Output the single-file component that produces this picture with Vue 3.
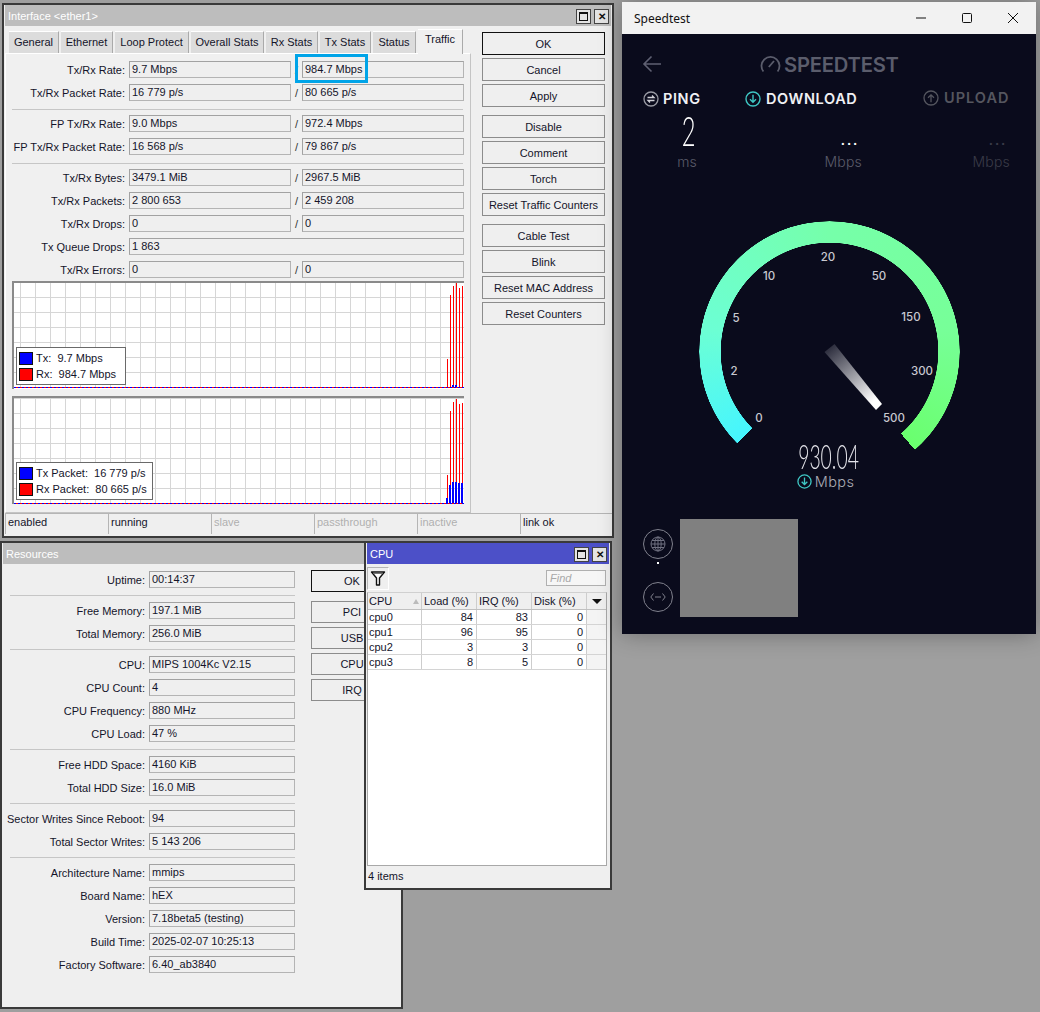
<script setup>
const tabs = [
  { t: 'General', w: 50 }, { t: 'Ethernet', w: 52 }, { t: 'Loop Protect', w: 74 }, { t: 'Overall Stats', w: 73 },
  { t: 'Rx Stats', w: 52 }, { t: 'Tx Stats', w: 51 }, { t: 'Status', w: 43 }, { t: 'Traffic', w: 45 }
]
const ifaceRows = [
  { l: 'Tx/Rx Rate:', a: '9.7 Mbps', b: '984.7 Mbps' },
  { l: 'Tx/Rx Packet Rate:', a: '16 779 p/s', b: '80 665 p/s' },
  { sep: true },
  { l: 'FP Tx/Rx Rate:', a: '9.0 Mbps', b: '972.4 Mbps' },
  { l: 'FP Tx/Rx Packet Rate:', a: '16 568 p/s', b: '79 867 p/s' },
  { sep: true },
  { l: 'Tx/Rx Bytes:', a: '3479.1 MiB', b: '2967.5 MiB' },
  { l: 'Tx/Rx Packets:', a: '2 800 653', b: '2 459 208' },
  { l: 'Tx/Rx Drops:', a: '0', b: '0' },
  { l: 'Tx Queue Drops:', a: '1 863' },
  { l: 'Tx/Rx Errors:', a: '0', b: '0' }
]
const ifaceBtnGroups = [
  [{ t: 'OK', def: true }, { t: 'Cancel' }, { t: 'Apply' }],
  [{ t: 'Disable' }, { t: 'Comment' }, { t: 'Torch' }, { t: 'Reset Traffic Counters' }],
  [{ t: 'Cable Test' }, { t: 'Blink' }, { t: 'Reset MAC Address' }, { t: 'Reset Counters' }]
]
const statuses = [
  { t: 'enabled', w: 103 },
  { t: 'running', w: 103 },
  { t: 'slave', w: 103, off: true },
  { t: 'passthrough', w: 103, off: true },
  { t: 'inactive', w: 103, off: true },
  { t: 'link ok', w: 92 }
]
const gridV = Array.from({ length: 30 }, (_, i) => 8 + 15 * i)
const graphs = [
  {
    base: 106,
    legend: ['Tx:  9.7 Mbps', 'Rx:  984.7 Mbps'],
    lw: 110,
    red: [[435, 78], [438, 14], [441, 5], [444, 2], [447, 7], [450, 5]],
    blue: [[440, 104], [443, 104]]
  },
  {
    base: 107,
    legend: ['Tx Packet:  16 779 p/s', 'Rx Packet:  80 665 p/s'],
    lw: 137,
    red: [[435, 79], [438, 15], [441, 6], [444, 3], [447, 8], [450, 7]],
    blue: [[434, 102], [437, 89], [440, 86], [443, 86], [446, 87], [449, 87]]
  }
]
const resRows = [
  { l: 'Uptime:', a: '00:14:37' },
  { sep: true },
  { l: 'Free Memory:', a: '197.1 MiB' },
  { l: 'Total Memory:', a: '256.0 MiB' },
  { sep: true },
  { l: 'CPU:', a: 'MIPS 1004Kc V2.15' },
  { l: 'CPU Count:', a: '4' },
  { l: 'CPU Frequency:', a: '880 MHz' },
  { l: 'CPU Load:', a: '47 %' },
  { sep: true },
  { l: 'Free HDD Space:', a: '4160 KiB' },
  { l: 'Total HDD Size:', a: '16.0 MiB' },
  { sep: true },
  { l: 'Sector Writes Since Reboot:', a: '94' },
  { l: 'Total Sector Writes:', a: '5 143 206' },
  { sep: true },
  { l: 'Architecture Name:', a: 'mmips' },
  { l: 'Board Name:', a: 'hEX' },
  { l: 'Version:', a: '7.18beta5 (testing)' },
  { l: 'Build Time:', a: '2025-02-07 10:25:13' },
  { l: 'Factory Software:', a: '6.40_ab3840' }
]
const cpus = [
  ['cpu0', 84, 83, 0],
  ['cpu1', 96, 95, 0],
  ['cpu2', 3, 3, 0],
  ['cpu3', 8, 5, 0]
]
const ticks = [
  { t: '0', x: 137, y: 218 },
  { t: '2', x: 112, y: 171 },
  { t: '5', x: 114, y: 118 },
  { t: '10', x: 147, y: 76 },
  { t: '20', x: 206, y: 57 },
  { t: '50', x: 257, y: 76 },
  { t: '150', x: 289, y: 117 },
  { t: '300', x: 300, y: 171 },
  { t: '500', x: 272, y: 218 }
]
</script>

<template>
  <div class="desk">
    <!-- Interface window -->
    <section class="win iface">
      <header class="tbar">
        <span class="ttl">Interface &lt;ether1&gt;</span>
        <span class="wbtn"><i class="maxi"></i></span>
        <span class="wbtn x">✕</span>
      </header>
      <div class="iface-main">
        <div class="iface-left">
          <nav class="tabs">
            <span v-for="t in tabs" :key="t.t" class="tab" :class="{ on: t.t === 'Traffic' }" :style="{ width: t.w + 'px' }">{{ t.t }}</span>
          </nav>
          <div class="panel">
            <div class="form">
              <template v-for="(r, i) in ifaceRows" :key="i">
                <div v-if="r.sep" class="sep"></div>
                <div v-else class="row">
                  <label class="lab">{{ r.l }}</label>
                  <div v-if="r.b" class="pair">
                    <span class="fld">{{ r.a }}</span>
                    <span class="slash">/</span>
                    <span class="fld">{{ r.b }}</span>
                  </div>
                  <span v-else class="fld wide">{{ r.a }}</span>
                </div>
              </template>
            </div>
            <div v-for="(g, gi) in graphs" :key="gi" class="graph">
              <svg width="452" height="108" shape-rendering="crispEdges">
                <rect width="452" height="108" fill="#fff" />
                <line v-for="x in gridV" :key="'v' + x" :x1="x" :x2="x" y1="0" :y2="g.base" stroke="#d6d6d6" />
                <line v-for="n in 7" :key="'h' + n" x1="0" x2="452" :y1="g.base - 15 * n" :y2="g.base - 15 * n" stroke="#d6d6d6" />
                <line x1="0" x2="452" :y1="g.base + 0.5" :y2="g.base + 0.5" stroke="#f00" stroke-dasharray="2 2" />
                <line x1="2" x2="452" :y1="g.base + 0.5" :y2="g.base + 0.5" stroke="#00f" stroke-dasharray="2 2" />
                <line v-for="b in g.red" :key="'r' + b[0]" :x1="b[0] + 0.5" :x2="b[0] + 0.5" :y1="b[1]" :y2="g.base" stroke="#f00" />
                <line v-for="b in g.blue" :key="'b' + b[0]" :x1="b[0] + 0.5" :x2="b[0] + 0.5" :y1="b[1]" :y2="g.base" stroke="#00f" stroke-width="2" />
                <rect width="452" height="2" fill="#8a8a8a" />
                <rect width="2" height="108" fill="#8a8a8a" />
              </svg>
              <div class="legend" :style="{ width: g.lw + 'px' }">
                <div class="lg"><i class="sw blue"></i><span>{{ g.legend[0] }}</span></div>
                <div class="lg"><i class="sw red"></i><span>{{ g.legend[1] }}</span></div>
              </div>
            </div>
          </div>
        </div>
        <div class="iface-btns">
          <div v-for="(grp, i) in ifaceBtnGroups" :key="i" class="btn-grp">
            <button v-for="b in grp" :key="b.t" class="btn" :class="{ def: b.def }">{{ b.t }}</button>
          </div>
        </div>
      </div>
      <footer class="status">
        <span v-for="s in statuses" :key="s.t" class="st" :class="{ off: s.off }" :style="{ width: s.w + 'px' }">{{ s.t }}</span>
      </footer>
      <div class="hl"></div>
    </section>

    <!-- Resources window -->
    <section class="win res">
      <header class="tbar">
        <span class="ttl">Resources</span>
      </header>
      <div class="res-main">
        <div class="form res-form">
          <template v-for="(r, i) in resRows" :key="i">
            <div v-if="r.sep" class="sep"></div>
            <div v-else class="row">
              <label class="lab">{{ r.l }}</label>
              <span class="fld">{{ r.a }}</span>
            </div>
          </template>
        </div>
        <div class="res-btns">
          <button class="btn def">OK</button>
          <div class="res-sub">
            <button class="btn">PCI</button>
            <button class="btn">USB</button>
            <button class="btn">CPU</button>
            <button class="btn">IRQ</button>
          </div>
        </div>
      </div>
    </section>

    <!-- CPU window -->
    <section class="win cpu">
      <header class="tbar blue">
        <span class="ttl">CPU</span>
        <span class="wbtn"><i class="maxi"></i></span>
        <span class="wbtn x">✕</span>
      </header>
      <div class="cpu-tools">
        <button class="filter">
          <svg width="16" height="17" viewBox="0 0 16 17">
            <path d="M1.5 2 H14.5 L9.5 8 V15 L6.5 15 V8 Z" fill="#fff" stroke="#111" stroke-width="1.4" stroke-linejoin="round" />
            <path d="M3.5 3.5 H12.5" stroke="#777" />
          </svg>
        </button>
        <span class="find">Find</span>
      </div>
      <div class="tbl">
        <div class="tr th">
          <span class="c c0">CPU<i class="sort"></i></span>
          <span class="c c1">Load (%)</span>
          <span class="c c1">IRQ (%)</span>
          <span class="c c1">Disk (%)</span>
          <span class="c cd"><i class="drop"></i></span>
        </div>
        <div v-for="r in cpus" :key="r[0]" class="tr">
          <span class="c c0">{{ r[0] }}</span>
          <span class="c c1 num">{{ r[1] }}</span>
          <span class="c c1 num">{{ r[2] }}</span>
          <span class="c c1 num">{{ r[3] }}</span>
          <span class="c cd gy"></span>
        </div>
      </div>
      <footer class="cpu-foot">4 items</footer>
    </section>

    <!-- Speedtest window -->
    <section class="speed">
      <header class="sp-title">
        <span class="sp-name">Speedtest</span>
        <span class="sp-ctl">
          <svg width="12" height="12" viewBox="0 0 12 12"><path d="M1 6 H11" stroke="#111" stroke-width="1" /></svg>
        </span>
        <span class="sp-ctl">
          <svg width="12" height="12" viewBox="0 0 12 12"><rect x="1.5" y="1.5" width="9" height="9" rx="1" fill="none" stroke="#111" /></svg>
        </span>
        <span class="sp-ctl">
          <svg width="12" height="12" viewBox="0 0 12 12"><path d="M1 1 L11 11 M11 1 L1 11" stroke="#111" stroke-width="1" /></svg>
        </span>
      </header>
      <div class="sp-body">
        <div class="sp-top">
          <div class="sp-head">
            <svg class="back" width="20" height="18" viewBox="0 0 20 18">
              <path d="M19 9 H2 M9.5 1.5 L2 9 L9.5 16.5" fill="none" stroke="#5f6072" stroke-width="1.6" />
            </svg>
            <svg class="logo-ic" width="21" height="18" viewBox="0 0 21 18">
              <path d="M3.4 16.5 A9 9 0 1 1 17.6 16.5" fill="none" stroke="#5b5d6c" stroke-width="1.8" />
              <path d="M8.8 12 L14 6" stroke="#5b5d6c" stroke-width="1.8" />
            </svg>
            <span class="logo">SPEEDTEST</span>
          </div>
          <div class="sp-stats">
            <div class="stat s1">
              <div class="st-lab">
                <svg width="16" height="16" viewBox="0 0 16 16">
                  <circle cx="8" cy="8" r="7" fill="none" stroke="#9a9ba4" stroke-width="1.3" />
                  <path d="M4.5 6.5 H11 L9 4.5 M11.5 9.5 H5 L7 11.5" fill="none" stroke="#d0d0d6" stroke-width="1.3" />
                </svg>
                <span>PING</span>
              </div>
              <div class="st-val big">2</div>
              <div class="st-unit">ms</div>
            </div>
            <div class="stat s2">
              <div class="st-lab">
                <svg width="16" height="16" viewBox="0 0 16 16">
                  <circle cx="8" cy="8" r="7" fill="none" stroke="#3fc7c4" stroke-width="1.4" />
                  <path d="M8 3.8 V11 M5 8.2 L8 11.2 L11 8.2" fill="none" stroke="#3fc7c4" stroke-width="1.4" />
                </svg>
                <span>DOWNLOAD</span>
              </div>
              <div class="st-val dots">...</div>
              <div class="st-unit">Mbps</div>
            </div>
            <div class="stat s3">
              <div class="st-lab">
                <svg width="16" height="16" viewBox="0 0 16 16">
                  <circle cx="8" cy="8" r="7" fill="none" stroke="#55565f" stroke-width="1.3" />
                  <path d="M8 12.2 V5 M5 7.8 L8 4.8 L11 7.8" fill="none" stroke="#55565f" stroke-width="1.3" />
                </svg>
                <span>UPLOAD</span>
              </div>
              <div class="st-val dots dim">...</div>
              <div class="st-unit dim">Mbps</div>
            </div>
          </div>
        </div>
        <div class="gauge">
          <div class="arc"></div>
          <span v-for="t in ticks" :key="t.t" class="tick" :style="{ left: t.x + 'px', top: t.y + 'px' }">{{ t.t }}</span>
          <svg class="needle" width="70" height="80" viewBox="0 0 70 80">
            <defs>
              <linearGradient id="nd" x1="6" y1="6" x2="58" y2="70" gradientUnits="userSpaceOnUse">
                <stop offset="0" stop-color="#2b2c3c" />
                <stop offset="0.85" stop-color="#fff" />
                <stop offset="1" stop-color="#fff" />
              </linearGradient>
            </defs>
            <polygon points="2.5,10 12.5,2 60,62 54,68" fill="url(#nd)" />
          </svg>
          <div class="readout">
            <div class="speedv">930.04</div>
            <div class="rd-unit">
              <svg width="15" height="15" viewBox="0 0 16 16">
                <circle cx="8" cy="8" r="7" fill="none" stroke="#3fc7c4" stroke-width="1.4" />
                <path d="M8 3.8 V11 M5 8.2 L8 11.2 L11 8.2" fill="none" stroke="#3fc7c4" stroke-width="1.4" />
              </svg>
              <span>Mbps</span>
            </div>
          </div>
        </div>
        <div class="sp-foot">
          <div class="ic-col">
            <span class="ring">
              <svg width="16" height="16" viewBox="0 0 16 16" fill="none" stroke="#6f7080" stroke-width="1">
                <circle cx="8" cy="8" r="7" />
                <ellipse cx="8" cy="8" rx="3.2" ry="7" />
                <path d="M1 8 H15 M2 4.5 H14 M2 11.5 H14 M8 1 V15" />
              </svg>
            </span>
            <i class="dot"></i>
            <span class="ring r2">
              <svg width="16" height="10" viewBox="0 0 16 10" fill="none" stroke="#80818d" stroke-width="1">
                <path d="M3.5 1.5 L0.8 5 L3.5 8.5 M12.5 1.5 L15.2 5 L12.5 8.5 M5 5 H11" />
              </svg>
            </span>
          </div>
          <div class="gray"></div>
        </div>
      </div>
    </section>
  </div>
</template>

<style scoped>
.desk {
  position: relative;
  width: 1040px;
  height: 1012px;
  overflow: hidden;
  font-family: "Liberation Sans", Arial, sans-serif;
  font-size: 11px;
  color: #14142a;
}
.win {
  position: absolute;
  box-sizing: border-box;
  background: #efefef;
  border: 2px solid #3a3a3a;
  display: flex;
  flex-direction: column;
}
.tbar {
  height: 21px;
  background: #bdbdbd;
  display: flex;
  align-items: center;
  gap: 3px;
  padding: 1px 2px 0 3px;
  box-sizing: border-box;
  flex: none;
  margin: 0 1px;
}
.tbar.blue { background: #4c50c8; }
.ttl {
  flex: 1;
  color: #fff;
  font-size: 11px;
}
.wbtn {
  box-sizing: border-box;
  width: 15px;
  height: 15px;
  background: #e4e4e4;
  border: 1px solid #444;
  display: flex;
  align-items: center;
  justify-content: center;
}
.wbtn.x {
  font-size: 10px;
  font-weight: 700;
  color: #111;
}
.maxi {
  display: block;
  width: 9px;
  height: 9px;
  box-sizing: border-box;
  border: 1px solid #111;
  border-top-width: 2px;
}

/* interface */
.iface {
  left: 2px;
  top: 3px;
  width: 612px;
  height: 535px;
}
.iface-main {
  display: flex;
  flex: 1;
  padding-left: 1px;
}
.iface-left { width: 466px; }
.tabs {
  display: flex;
  gap: 2px;
  height: 27px;
  align-items: flex-end;
  padding-left: 4px;
}
.tab {
  box-sizing: border-box;
  height: 22px;
  padding-top: 4px;
  text-align: center;
  background: #dcdcdc;
  border-top: 1px solid #fff;
  border-right: 1px solid #aaa;
  white-space: nowrap;
  flex: none;
}
.tab.on {
  height: 25px;
  padding-top: 3px;
  background: #f0f0f0;
  margin-bottom: -1px;
  position: relative;
  z-index: 1;
}
.panel {
  box-sizing: border-box;
  height: 460px;
  border: 1px solid #c4c4c4;
  border-top-color: #fff;
  border-left-color: #fff;
  padding: 7px 0 0 6px;
  background: #f0f0f0;
}
.form { display: flex; flex-direction: column; }
.panel .form { margin-bottom: 3px; }
.row {
  display: flex;
  height: 17px;
  margin-bottom: 6px;
  align-items: center;
}
.panel .row:last-child { margin-bottom: 0; }
.lab {
  display: flex;
  justify-content: flex-end;
  width: 113px;
  margin-right: 4px;
  white-space: nowrap;
  flex: none;
}
.pair { display: flex; align-items: center; }
.fld {
  box-sizing: border-box;
  display: block;
  width: 162px;
  height: 17px;
  line-height: 15px;
  padding-left: 2px;
  background: #efefef;
  border: 1px solid #a2a2a2;
  border-bottom-color: #b4b4b4;
  border-right-color: #b4b4b4;
  white-space: nowrap;
  flex: none;
}
.fld.wide { width: 335px; }
.slash {
  width: 11px;
  text-align: center;
  color: #333;
  flex: none;
}
.sep {
  height: 1px;
  background: #c6c6c6;
  margin: 2px 0 5px;
  width: 451px;
}
.graph {
  position: relative;
  width: 452px;
  height: 108px;
  margin-bottom: 7px;
}
.graph svg { display: block; }
.legend {
  position: absolute;
  left: 4px;
  bottom: 4px;
  height: 38px;
  box-sizing: border-box;
  background: #fff;
  border: 1px solid #6a6a6a;
  padding: 2px 0 0 2px;
  white-space: pre;
}
.lg {
  display: flex;
  align-items: center;
  gap: 3px;
  height: 16px;
}
.sw {
  display: block;
  width: 14px;
  height: 13px;
  box-sizing: border-box;
  border: 1px solid #111;
}
.sw.blue { background: #00f; }
.sw.red { background: #f00; }
.iface-btns {
  width: 123px;
  margin-left: 11px;
  padding-top: 6px;
}
.btn-grp {
  display: flex;
  flex-direction: column;
  gap: 3px;
  margin-bottom: 8px;
}
.btn {
  box-sizing: border-box;
  display: block;
  width: 123px;
  height: 23px;
  background: #efefef;
  border: 1px solid #8c8c8c;
  padding: 0;
  font: 11px "Liberation Sans", Arial, sans-serif;
  color: #14142a;
  text-align: center;
}
.btn.def { border-color: #111; }
.status {
  display: flex;
  height: 21px;
  padding-left: 1px;
  margin-bottom: 2px;
  flex: none;
}
.st {
  box-sizing: border-box;
  border-top: 1px solid #b5b5b5;
  border-left: 1px solid #b5b5b5;
  padding: 2px 0 0 2px;
  background: #efefef;
}
.st.off { color: #b0b0b0; }
.hl {
  position: absolute;
  left: 291px;
  top: 49px;
  width: 73px;
  height: 29px;
  box-sizing: border-box;
  border: 3px solid #00a4e8;
}

/* resources */
.res {
  left: 0;
  top: 541px;
  width: 403px;
  height: 468px;
}
.res-main {
  display: flex;
  padding: 7px 0 0 8px;
}
.res-form { width: 285px; }
.res-form .lab {
  width: 135px;
  margin-right: 4px;
}
.res-form .fld { width: 146px; }
.res-form .sep {
  width: 285px;
  margin: 1px 0 6px;
}
.res-btns {
  margin-left: 16px;
  margin-top: -1px;
}
.res-btns .btn {
  width: 82px;
  height: 22px;
  white-space: nowrap;
}
.res-sub {
  margin-top: 9px;
  display: flex;
  flex-direction: column;
  gap: 4px;
}

/* cpu */
.cpu {
  left: 364px;
  top: 541px;
  width: 248px;
  height: 349px;
  z-index: 2;
}
.cpu-tools {
  height: 28px;
  display: flex;
  align-items: center;
  justify-content: space-between;
  padding: 0 4px 0 1px;
  flex: none;
}
.filter {
  width: 22px;
  height: 23px;
  padding: 2px 0 0;
  background: #efefef;
  border: 1px solid #b5b5b5;
  border-right-color: #fff;
  border-bottom-color: #fff;
  display: flex;
  justify-content: center;
}
.find {
  box-sizing: border-box;
  width: 60px;
  height: 16px;
  background: #f6f6f6;
  border: 1px solid #b0b0b0;
  color: #a8a8a8;
  font-style: italic;
  padding-left: 3px;
  line-height: 14px;
}
.tbl {
  flex: 1;
  margin: 0 3px 0 1px;
  background: #fff;
  border: 1px solid #a8a8a8;
  border-top-color: #d0d0d0;
}
.tr {
  display: flex;
  box-sizing: border-box;
  height: 15px;
  line-height: 14px;
  border-bottom: 1px solid #d4d4d4;
}
.th {
  height: 17px;
  line-height: 16px;
  background: #efefef;
  border-bottom-color: #c0c0c0;
}
.c {
  box-sizing: border-box;
  border-right: 1px solid #cdcdcd;
  padding: 0 2px;
  position: relative;
  white-space: nowrap;
  flex: none;
}
.c0 { width: 54px; padding-left: 1px; }
.c1 { width: 55px; }
.cd { width: 19px; border-right: 0; }
.gy { background: #f4f4f4; }
.num { text-align: right; padding-right: 3px; }
.sort {
  position: absolute;
  right: 2px;
  top: 6px;
  width: 0;
  height: 0;
  border: 3px solid transparent;
  border-bottom: 5px solid #bbb;
  border-top: 0;
}
.drop {
  position: absolute;
  left: 5px;
  top: 6px;
  width: 0;
  height: 0;
  border: 5px solid transparent;
  border-top: 5px solid #111;
  border-bottom: 0;
}
.cpu-foot {
  height: 22px;
  line-height: 20px;
  padding-left: 2px;
  flex: none;
}

/* speedtest */
.speed {
  position: absolute;
  left: 622px;
  top: 2px;
  width: 414px;
  height: 632px;
  z-index: 3;
  box-shadow: 0 0 22px rgba(0, 0, 0, 0.32);
  display: flex;
  flex-direction: column;
  font-family: Inter, "Liberation Sans", sans-serif;
}
.sp-title {
  height: 32px;
  background: #f2f2f2;
  display: flex;
  align-items: center;
  flex: none;
  color: #111;
  padding-left: 12px;
  font-family: "Noto Sans", sans-serif;
}
.sp-name { flex: 1; font-size: 12px; }
.sp-ctl {
  width: 46px;
  height: 32px;
  display: flex;
  align-items: center;
  justify-content: center;
}
.sp-body {
  flex: 1;
  background: #0a0b1c;
  display: flex;
  flex-direction: column;
}
.sp-top { height: 166px; padding-left: 21px; }
.sp-head {
  height: 50px;
  display: flex;
  align-items: center;
  padding-top: 10px;
  box-sizing: border-box;
}
.back { margin-left: -1px; }
.logo-ic { margin-left: 98px; margin-right: 3px; }
.logo {
  color: #5b5d6c;
  font-size: 20.2px;
  font-weight: 600;
  letter-spacing: -0.2px;
}
.sp-stats { display: flex; margin-top: 6px; }
.stat { box-sizing: border-box; text-align: right; flex: none; }
.s1 { width: 102px; padding-right: 48px; }
.s2 { width: 117px; }
.s3 { width: 87px; margin-left: 61px; }
.st-lab {
  display: flex;
  align-items: center;
  height: 17px;
  gap: 5px;
  font-size: 14.5px;
  font-weight: 600;
  letter-spacing: 0.6px;
  color: #f0f0f4;
  white-space: nowrap;
}
.s1 .st-lab { width: 60px; gap: 4px; }
.s3 .st-lab { color: #55565f; letter-spacing: 1px; margin-top: -1px; margin-bottom: 1px; }
.st-val {
  color: #fff;
  box-sizing: border-box;
  height: 46px;
  font-family: Lato, sans-serif;
  font-weight: 300;
}
.big {
  font-size: 41px;
  line-height: 41px;
  padding-top: 3px;
  transform: scaleX(0.58);
  transform-origin: 94% 50%;
}
.dots {
  font-size: 18px;
  font-weight: 400;
  line-height: 20px;
  padding: 21px 3px 0 0;
  letter-spacing: 1.8px;
}
.dim { color: #3a3b48 !important; }
.st-unit {
  font-size: 14px;
  color: #5b5c6a;
  font-weight: 300;
  letter-spacing: 0.2px;
}
.gauge {
  position: relative;
  height: 310px;
  flex: none;
}
.arc {
  position: absolute;
  left: 77px;
  top: 21px;
  width: 261px;
  height: 261px;
  border-radius: 50%;
  background: conic-gradient(from 225deg, #45f5ff 0deg, #6cffd4 55deg, #76ffaa 135deg, #77ff98 215deg, #6aff6e 274deg, transparent 274deg);
  -webkit-mask: radial-gradient(circle, transparent 108.5px, #000 109px, #000 130px, transparent 130.5px);
  mask: radial-gradient(circle, transparent 108.5px, #000 109px, #000 130px, transparent 130.5px);
}
.tick {
  position: absolute;
  transform: translate(-50%, -50%);
  font-size: 11.5px;
  font-weight: 500;
  color: #c8c8d0;
}
.needle {
  position: absolute;
  left: 200px;
  top: 142px;
}
.readout {
  position: absolute;
  left: 150px;
  top: 241px;
  width: 115px;
  text-align: center;
}
.speedv {
  font-family: Lato, sans-serif;
  font-weight: 300;
  font-size: 34px;
  line-height: 29px;
  color: #e4e4ea;
  transform: scaleX(0.57);
  transform-origin: 48% 50%;
}
.rd-unit {
  display: flex;
  align-items: center;
  justify-content: center;
  gap: 3px;
  font-size: 14.5px;
  color: #a9aab4;
  font-weight: 300;
  letter-spacing: 0.4px;
  margin-top: 3px;
  transform: translateX(-4px);
}
.sp-foot {
  display: flex;
  gap: 7px;
  padding: 9px 0 0 21px;
  flex: 1;
}
.ic-col {
  width: 30px;
  display: flex;
  flex-direction: column;
  align-items: center;
  padding-top: 10px;
}
.ring {
  box-sizing: border-box;
  width: 30px;
  height: 30px;
  border: 1.5px solid #80818d;
  border-radius: 50%;
  display: flex;
  align-items: center;
  justify-content: center;
  flex: none;
}
.dot {
  display: block;
  width: 2px;
  height: 2px;
  background: #fff;
  margin: 3px 0 18px;
}
.gray {
  width: 118px;
  height: 98px;
  background: #808080;
}
</style>

<style>
html, body {
  margin: 0;
  background: #9f9f9f;
}
</style>
